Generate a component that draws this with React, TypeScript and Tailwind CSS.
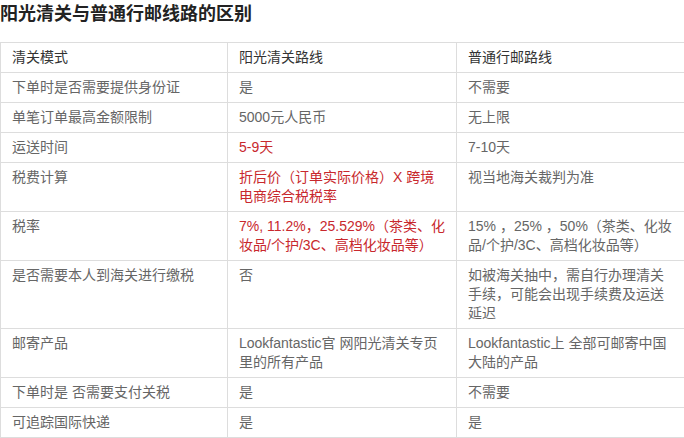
const rows: { label: string; sunny: string; normal: string; red?: boolean }[] = [
  { label: '下单时是否需要提供身份证', sunny: '是', normal: '不需要' },
  { label: '单笔订单最高金额限制', sunny: '5000元人民币', normal: '无上限' },
  { label: '运送时间', sunny: '5-9天', normal: '7-10天', red: true },
  { label: '税费计算', sunny: '折后价（订单实际价格）X 跨境电商综合税税率', normal: '视当地海关裁判为准', red: true },
  {
    label: '税率',
    sunny: '7%, 11.2%，25.529%（茶类、化妆品/个护/3C、高档化妆品等）',
    normal: '15% ，25% ，50%（茶类、化妆品/个护/3C、高档化妆品等）',
    red: true,
  },
  { label: '是否需要本人到海关进行缴税', sunny: '否', normal: '如被海关抽中，需自行办理清关手续，可能会出现手续费及运送延迟' },
  { label: '邮寄产品', sunny: 'Lookfantastic官 网阳光清关专页里的所有产品', normal: 'Lookfantastic上 全部可邮寄中国大陆的产品' },
  { label: '下单时是 否需要支付关税', sunny: '是', normal: '不需要' },
  { label: '可追踪国际快递', sunny: '是', normal: '是' },
];

const font = { fontFamily: '"Liberation Sans", "Noto Sans CJK SC", sans-serif' };

export default function App() {
  return (
    <div className="w-[684px] h-[438px] overflow-hidden bg-white" style={font}>
      <h2 className="mt-[2px] text-[18px] leading-[24px] font-bold text-[#222]">阳光清关与普通行邮线路的区别</h2>
      <div className="mt-[16px] overflow-hidden">
        <table className="w-[686px] table-fixed border-collapse text-[14px] leading-[19px] text-[#666]">
          <colgroup>
            <col className="w-[227px]" />
            <col className="w-[229px]" />
            <col className="w-[230px]" />
          </colgroup>
          <thead>
            <tr>
              <Cell head>清关模式</Cell>
              <Cell head>阳光清关路线</Cell>
              <Cell head>普通行邮路线</Cell>
            </tr>
          </thead>
          <tbody>
            {rows.map((r) => (
              <tr key={r.label}>
                <Cell>{r.label}</Cell>
                <Cell red={r.red}>{r.sunny}</Cell>
                <Cell>{r.normal}</Cell>
              </tr>
            ))}
          </tbody>
        </table>
      </div>
    </div>
  );
}

function Cell({ children, head, red }: { children: React.ReactNode; head?: boolean; red?: boolean }) {
  return (
    <td
      className={`border border-[#dddddd] px-[11px] py-[5px] align-top text-left font-normal ${
        head ? 'text-[#333]' : red ? 'text-[#c8282d]' : ''
      }`}
    >
      {children}
    </td>
  );
}
